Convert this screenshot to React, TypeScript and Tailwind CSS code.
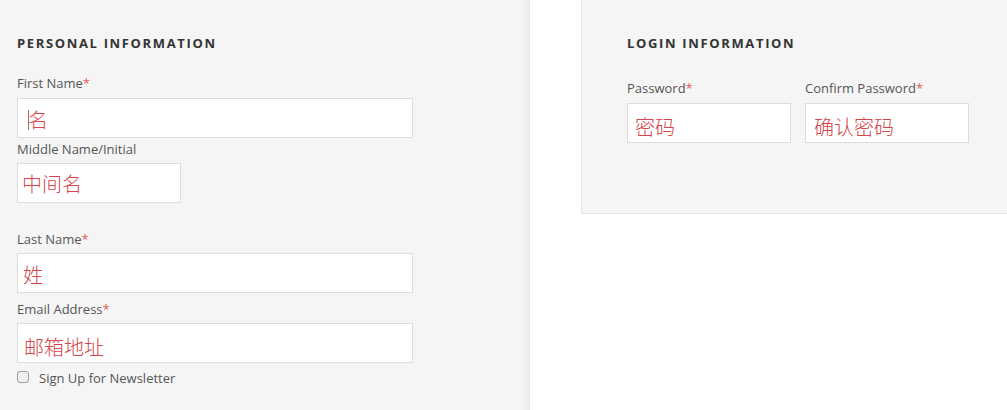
import React from "react";

const font = { fontFamily: '"Open Sans", "Noto Sans", sans-serif' };

function Label({ text, req }: { text: string; req?: boolean }) {
  return (
    <div className="text-[13px] leading-[18px] text-[#555] pt-[1px]">
      {text}
      {req && <span className="text-[#e0605a]">*</span>}
    </div>
  );
}

function Box({
  w,
  value,
  cls,
  caret,
}: {
  w: string;
  value: string;
  cls: string;
  caret?: boolean;
}) {
  return (
    <div
      className={`${w} h-[40px] bg-white border border-[#dcdcdc] flex items-center ${cls} text-[20px] font-light text-[#d4464b]`}
      style={{ fontFamily: '"Noto Sans CJK SC", "Noto Sans", sans-serif' }}
    >
      {caret && <span className="inline-block w-px h-[20px] bg-[#c46060] mr-[-1px]" />}
      <span className="leading-none">{value}</span>
    </div>
  );
}

export default function App() {
  return (
    <div className="w-[1007px] h-[410px] bg-white flex overflow-hidden" style={font}>
      <div className="w-[530px] h-[410px] bg-[#f5f5f5] flex border-r border-[#e6e6e6]">
        <div className="flex-1 pl-[17px] pt-[34px]">
          <div className="text-[13px] leading-[18px] font-bold tracking-[1.65px] text-[#333]">
            PERSONAL INFORMATION
          </div>
          <div className="mt-[21px]">
            <Label text="First Name" req />
          </div>
          <div className="mt-[6px]">
            <Box w="w-[396px]" value="名" cls="pl-[10px] pt-[4px]" caret />
          </div>
          <div className="mt-[1px]">
            <Label text="Middle Name/Initial" />
          </div>
          <div className="mt-[5px]">
            <Box w="w-[164px]" value="中间名" cls="pl-[4px] pt-[2px]" />
          </div>
          <div className="mt-[26px]">
            <Label text="Last Name" req />
          </div>
          <div className="mt-[5px]">
            <Box w="w-[396px]" value="姓" cls="pl-[5px] pt-[4px]" />
          </div>
          <div className="mt-[6px]">
            <Label text="Email Address" req />
          </div>
          <div className="mt-[5px]">
            <Box w="w-[396px]" value="邮箱地址" cls="pl-[6px] pt-[8px]" />
          </div>
          <div className="mt-[6px] flex items-center">
            <span className="w-[12px] h-[12px] rounded-[3px] border border-[#a0a0a0] bg-[#f0f0f0] -mt-[3px]" />
            <span className="ml-[10px] text-[13px] leading-[18px] text-[#555]">
              Sign Up for Newsletter
            </span>
          </div>
        </div>
        <div className="w-[5px] bg-[#f0f0f0]" />
      </div>
      <div className="w-[51px]" />
      <div className="flex-1 h-[214px] bg-[#f5f5f5] border-l border-b border-[#e6e6e6] pl-[45px] pt-[34px]">
        <div className="text-[13px] leading-[18px] font-bold tracking-[1.65px] text-[#333]">
          LOGIN INFORMATION
        </div>
        <div className="mt-[26px] flex gap-[14px]">
          <div>
            <Label text="Password" req />
            <div className="mt-[6px]">
              <Box w="w-[164px]" value="密码" cls="pl-[7px] pt-[8px]" />
            </div>
          </div>
          <div>
            <Label text="Confirm Password" req />
            <div className="mt-[6px]">
              <Box w="w-[164px]" value="确认密码" cls="pl-[8px] pt-[8px]" />
            </div>
          </div>
        </div>
      </div>
    </div>
  );
}
